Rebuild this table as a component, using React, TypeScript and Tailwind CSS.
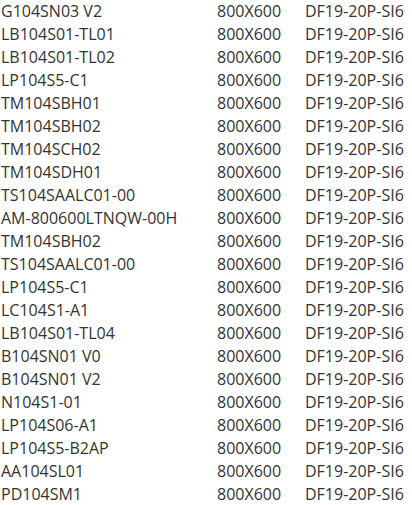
import React from "react";

const models = [
  "G104SN03 V2",
  "LB104S01-TL01",
  "LB104S01-TL02",
  "LP104S5-C1",
  "TM104SBH01",
  "TM104SBH02",
  "TM104SCH02",
  "TM104SDH01",
  "TS104SAALC01-00",
  "AM-800600LTNQW-00H",
  "TM104SBH02",
  "TS104SAALC01-00",
  "LP104S5-C1",
  "LC104S1-A1",
  "LB104S01-TL04",
  "B104SN01 V0",
  "B104SN01 V2",
  "N104S1-01",
  "LP104S06-A1",
  "LP104S5-B2AP",
  "AA104SL01",
  "PD104SM1",
];

export default function App() {
  return (
    <div
      className="w-[412px] h-[505px] bg-white overflow-hidden text-[16px] leading-[23px] text-[#333333]"
      style={{ fontFamily: '"Open Sans", sans-serif' }}
    >
      {models.map((m, i) => (
        <div key={i} className="grid grid-cols-[216px_88px_1fr] h-[23px] pl-px whitespace-nowrap">
          <span>{m}</span>
          <span>800X600</span>
          <span>DF19-20P-SI6</span>
        </div>
      ))}
    </div>
  );
}
